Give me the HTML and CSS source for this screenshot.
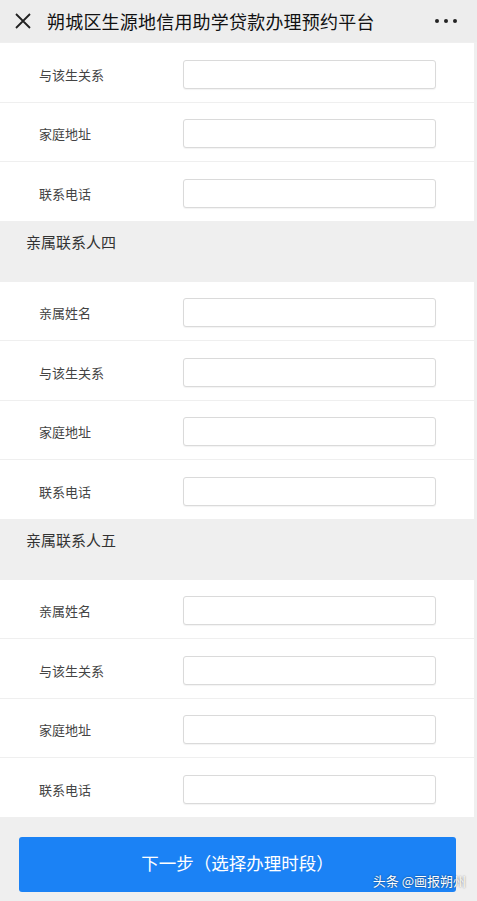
FILE: index.html
```html
<!DOCTYPE html>
<html lang="zh-CN">
<head>
  <meta charset="UTF-8" />
  <meta name="viewport" content="width=device-width, initial-scale=1.0" />
  <title>朔城区生源地信用助学贷款办理预约平台</title>
  <link rel="stylesheet" href="styles.css">
</head>
<body>
  <!-- 顶部标题栏 -->
  <div class="topbar">
    <svg class="close" width="16" height="16" viewBox="0 0 16 16">
      <path d="M1 1 L15 15 M15 1 L1 15" stroke="#222" stroke-width="1.8" fill="none" />
    </svg>
    <div class="title">朔城区生源地信用助学贷款办理预约平台</div>
    <div class="more"><span></span><span></span><span></span></div>
  </div>

  <div class="form">
    <div class="row"><label>与该生关系</label><input type="text" /></div>
    <div class="row"><label>家庭地址</label><input type="text" /></div>
    <div class="row"><label>联系电话</label><input type="text" /></div>

    <div class="section">亲属联系人四</div>
    <div class="row"><label>亲属姓名</label><input type="text" /></div>
    <div class="row"><label>与该生关系</label><input type="text" /></div>
    <div class="row"><label>家庭地址</label><input type="text" /></div>
    <div class="row"><label>联系电话</label><input type="text" /></div>

    <div class="section">亲属联系人五</div>
    <div class="row"><label>亲属姓名</label><input type="text" /></div>
    <div class="row"><label>与该生关系</label><input type="text" /></div>
    <div class="row"><label>家庭地址</label><input type="text" /></div>
    <div class="row"><label>联系电话</label><input type="text" /></div>
  </div>

  <div class="footer">
    <button class="next">下一步（选择办理时段）</button>
    <div class="mark">头条 @画报朔州</div>
  </div>
</body>
</html>
```

FILE: styles.css
```css
* {
  box-sizing: border-box;
}

body {
  margin: 0;
  background-color: #efefef;
  font-family: "Noto Sans CJK SC", "Noto Sans", sans-serif;
  color: #333;
  height: 901px;
  overflow: hidden;
}

.topbar {
  height: 42px;
  display: flex;
  align-items: center;
  padding: 0 20px 0 15px;
  background-color: #ededed;
}

.close {
  flex: none;
  margin-right: 16px;
}

.title {
  flex: 1;
  font-size: 18px;
  color: #111;
  letter-spacing: 0.2px;
  white-space: nowrap;
}

.more {
  display: flex;
  gap: 5px;
}

.more span {
  width: 4px;
  height: 4px;
  border-radius: 50%;
  background-color: #222;
}

.form {
  display: flex;
  flex-direction: column;
  gap: 1px;
  margin-top: 1px;
}

.row {
  height: 58.5px;
  display: flex;
  align-items: center;
  background-color: #fff;
  margin-right: 3px;
  padding: 4px 0 0 39px;
}

.row label {
  width: 144px;
  font-size: 13px;
  color: #444;
}

.row input {
  width: 253px;
  height: 29px;
  border: 1px solid #dadada;
  border-radius: 3px;
  box-shadow: 0 1px 1px rgba(0, 0, 0, 0.05);
  background: #fff;
}

.section {
  height: 59px;
  padding: 9px 0 0 26px;
  font-size: 15px;
  color: #333;
}

.footer {
  position: relative;
  padding: 20px 21px 0 19px;
}

.next {
  width: 100%;
  height: 55px;
  border: none;
  border-radius: 3px;
  background-color: #1b82f5;
  color: #fff;
  font-family: inherit;
  font-size: 17.5px;
  padding-bottom: 4px;
}

/* 水印 */
.mark {
  position: absolute;
  right: 11px;
  top: 54px;
  font-size: 13px;
  color: #fff;
  text-shadow: 0 0 2px rgba(0, 0, 0, 0.6);
}
```
